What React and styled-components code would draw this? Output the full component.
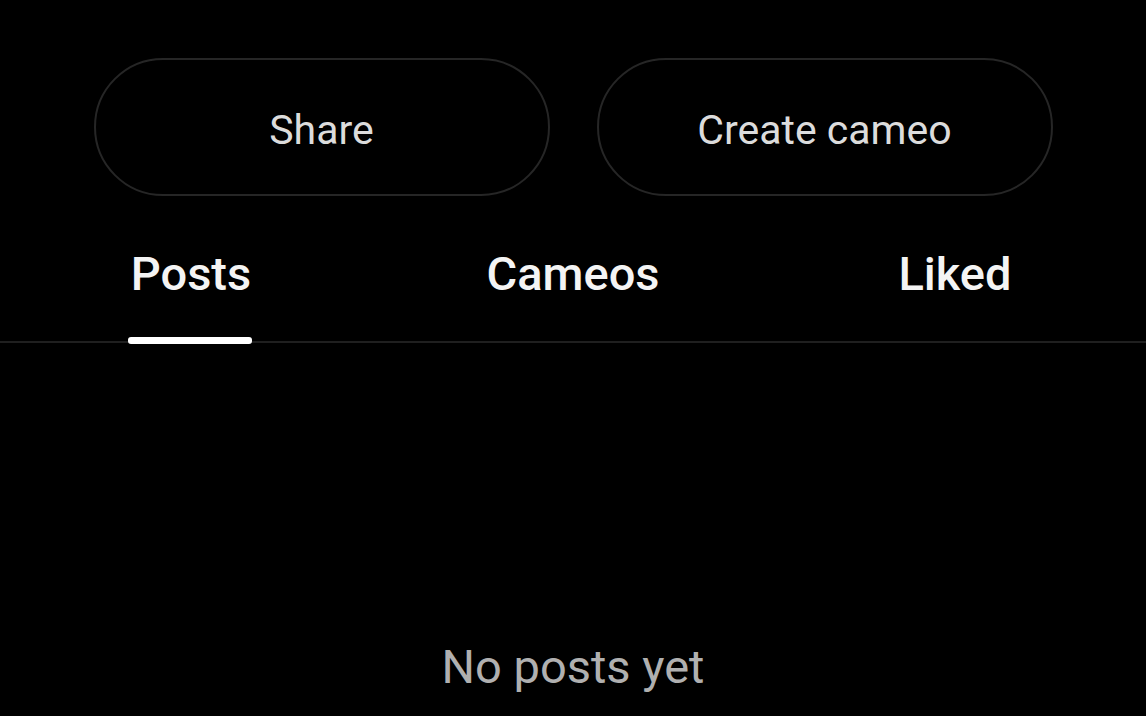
import styled, { createGlobalStyle } from "styled-components";

const GlobalStyle = createGlobalStyle`
  html, body {
    margin: 0;
    padding: 0;
    background: #000;
  }
  body {
    font-family: Roboto, "Noto Sans", Arial, sans-serif;
    -webkit-font-smoothing: antialiased;
  }
`;

const tabs = ["Posts", "Cameos", "Liked"];

function App() {
  return (
    <>
      <GlobalStyle />
      <Page>
        <Actions>
          <PillButton>Share</PillButton>
          <PillButton>Create cameo</PillButton>
        </Actions>
        <TabBar>
          {tabs.map((t, i) => (
            <Tab key={t}>
              <TabLabel $active={i === 0}>{t}</TabLabel>
            </Tab>
          ))}
        </TabBar>
        <Empty>No posts yet</Empty>
      </Page>
    </>
  );
}

export default App;

const Page = styled.div`
  width: 1146px;
  height: 716px;
  background: #000;
  overflow: hidden;
  display: flex;
  flex-direction: column;
`;

const Actions = styled.div`
  display: flex;
  justify-content: center;
  gap: 47px;
  padding-top: 58px;
`;

const PillButton = styled.button`
  width: 456px;
  height: 138px;
  border-radius: 69px;
  border: 2px solid #262626;
  background: #000;
  color: #dcdcdc;
  font-family: Roboto, Arial, sans-serif;
  font-size: 41px;
  font-weight: 400;
  padding: 5px 0 0;
`;

const TabBar = styled.div`
  display: grid;
  grid-template-columns: repeat(3, 1fr);
  margin-top: 50px;
  border-bottom: 2px solid #1f1f1f;
`;

const Tab = styled.div`
  display: flex;
  justify-content: center;
`;

const TabLabel = styled.div`
  position: relative;
  color: #f4f4f4;
  font-size: 47px;
  font-weight: 500;
  line-height: 56px;
  padding-bottom: 39px;

  &::after {
    content: "";
    display: ${(p) => (p.$active ? "block" : "none")};
    position: absolute;
    left: -3px;
    right: -1px;
    bottom: -3px;
    height: 7px;
    border-radius: 3px;
    background: #fff;
  }
`;

const Empty = styled.div`
  margin-top: 296px;
  text-align: center;
  color: #b0b0b0;
  font-size: 47px;
  font-weight: 400;
  line-height: 56px;
`;
